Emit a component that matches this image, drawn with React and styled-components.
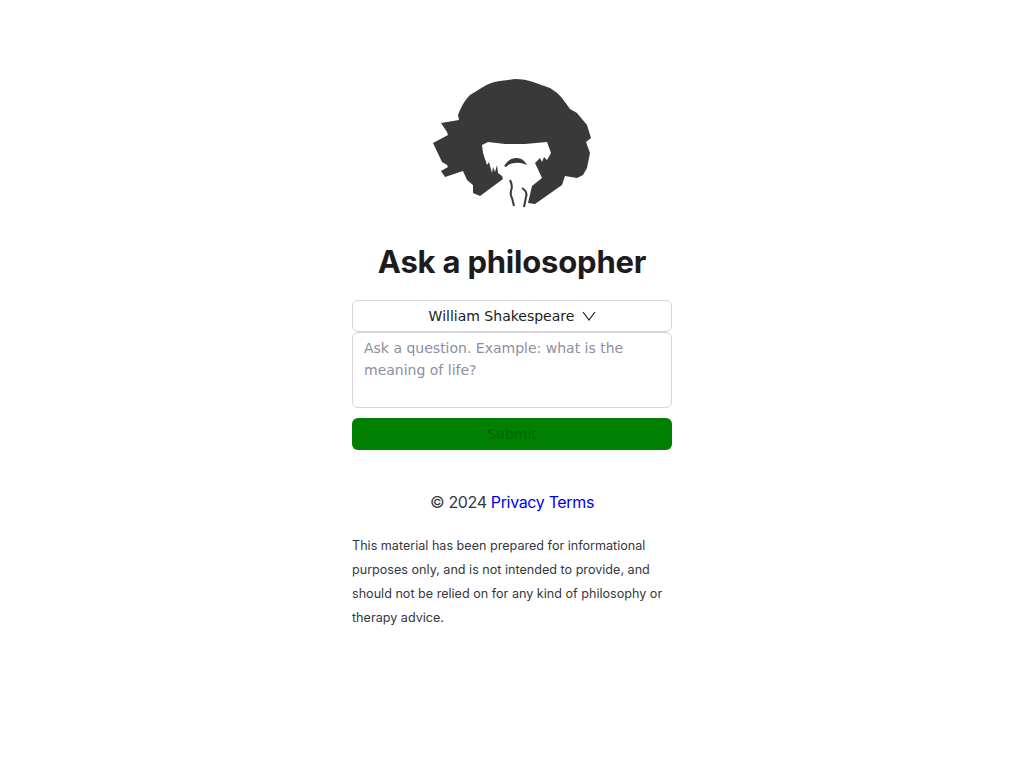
import styled, { createGlobalStyle } from "styled-components";

const GlobalStyle = createGlobalStyle`
  body {
    margin: 0;
    background: #fff;
    font-family: Inter, "Liberation Sans", sans-serif;
    color: #202123;
  }
`;

const Page = styled.main`
  display: flex;
  flex-direction: column;
  align-items: center;
  min-height: 768px;
  padding-top: 70px;
  box-sizing: border-box;
`;

const Column = styled.div`
  display: flex;
  flex-direction: column;
  width: 320px;
`;

const Logo = styled.svg`
  display: block;
  width: 184px;
  height: 150px;
  align-self: center;
`;

const Title = styled.h1`
  margin: 17px 0 13px;
  font-size: 31px;
  line-height: 50px;
  font-weight: 700;
  letter-spacing: -0.2px;
  text-align: center;
  color: #1c1c1e;
`;

const Form = styled.form`
  display: flex;
  flex-direction: column;
`;

const Select = styled.button`
  display: flex;
  align-items: center;
  justify-content: center;
  gap: 7px;
  height: 32px;
  padding: 0 0 0 2px;
  background: #fff;
  border: 1px solid #d6d6da;
  border-radius: 6px;
  font-family: "DejaVu Sans", sans-serif;
  font-size: 14px;
  color: #202123;
`;

const Question = styled.textarea`
  display: block;
  box-sizing: border-box;
  width: 100%;
  height: 76px;
  margin: 0 0 10px;
  padding: 4px 11px;
  border: 1px solid #d6d6da;
  border-radius: 6px;
  resize: none;
  outline: none;
  font-family: "DejaVu Sans", sans-serif;
  font-size: 14px;
  line-height: 22px;

  &::placeholder {
    color: #8e8ea0;
    opacity: 1;
  }
`;

const Submit = styled.button`
  height: 32px;
  padding: 0;
  border: none;
  border-radius: 6px;
  background: #008000;
  font-family: "DejaVu Sans", sans-serif;
  font-size: 14px;
  color: #006400;
`;

const Footer = styled.p`
  margin: 40px 0 0;
  font-size: 16px;
  line-height: 24px;
  letter-spacing: -0.35px;
  text-align: center;
  color: #353740;
`;

const FooterLink = styled.a`
  color: #0000ee;
  text-decoration: none;
`;

const Disclaimer = styled.p`
  margin: 20px 0 0;
  font-size: 12.6px;
  line-height: 24px;
  color: #353740;
`;

// traced from the reference, coordinates are page pixels
const Philosopher = () => (
  <Logo viewBox="420 70 184 150">
    <path
      fill="#393939"
      d="M458 115 L460 110 Q464 101 470 95 L483 87 Q491 82 500 81 L515 79 Q525 79 533 82 L550 88 Q557 92 562 98 L570 109 L577 113 L587 125 L591 138 L586 142 L590 153 L587 168 L583 175 L577 178 L565 176 L562 185 L535 204 L528 203 L532 186 L542 178 L535 163 L540 158 L542 162 L544 157 L547 160 L551 153 L547 142 L525 144 L505 144 L488 142 L482 145 L483 153 L487 165 L489 162 L492 173 L493 167 L495 172 L497 165 L498 173 L502 176 L503 179 L480 196 L473 193 L473 185 L467 180 L463 171 L445 177 L441 171 L448 167 L447 165 L442 162 L433 143 L448 135 L447 132 L441 123 L459 120 Z"
    />
    <path fill="#393939" d="M504 166 Q508 159 515 158 Q523 157 527 165 Q520 162 515 163 Q510 163 506 167 Z" />
    <path fill="none" stroke="#393939" strokeWidth="2" d="M510 180 Q513 186 511 191 Q510 195 512 198 L514 206" />
    <path fill="none" stroke="#393939" strokeWidth="2" d="M522 188 Q528 192 526 197 L524 207" />
  </Logo>
);

const Chevron = () => (
  <svg width="16" height="16" viewBox="0 0 16 16" fill="none" stroke="#202123" strokeWidth="1.2">
    <path d="M2 4 L8 12 L14 4" />
  </svg>
);

export default function App() {
  return (
    <Page>
      <GlobalStyle />
      <Column>
        <Philosopher />
        <Title>Ask a philosopher</Title>
        <Form>
          <Select type="button">
            William Shakespeare
            <Chevron />
          </Select>
          <Question placeholder="Ask a question. Example: what is the meaning of life?" />
          <Submit type="button">Submit</Submit>
        </Form>
        <Footer>
          © 2024 <FooterLink href="#">Privacy</FooterLink> <FooterLink href="#">Terms</FooterLink>
        </Footer>
        <Disclaimer>
          This material has been prepared for informational purposes only, and is not intended to provide, and should
          not be relied on for any kind of philosophy or therapy advice.
        </Disclaimer>
      </Column>
    </Page>
  );
}
